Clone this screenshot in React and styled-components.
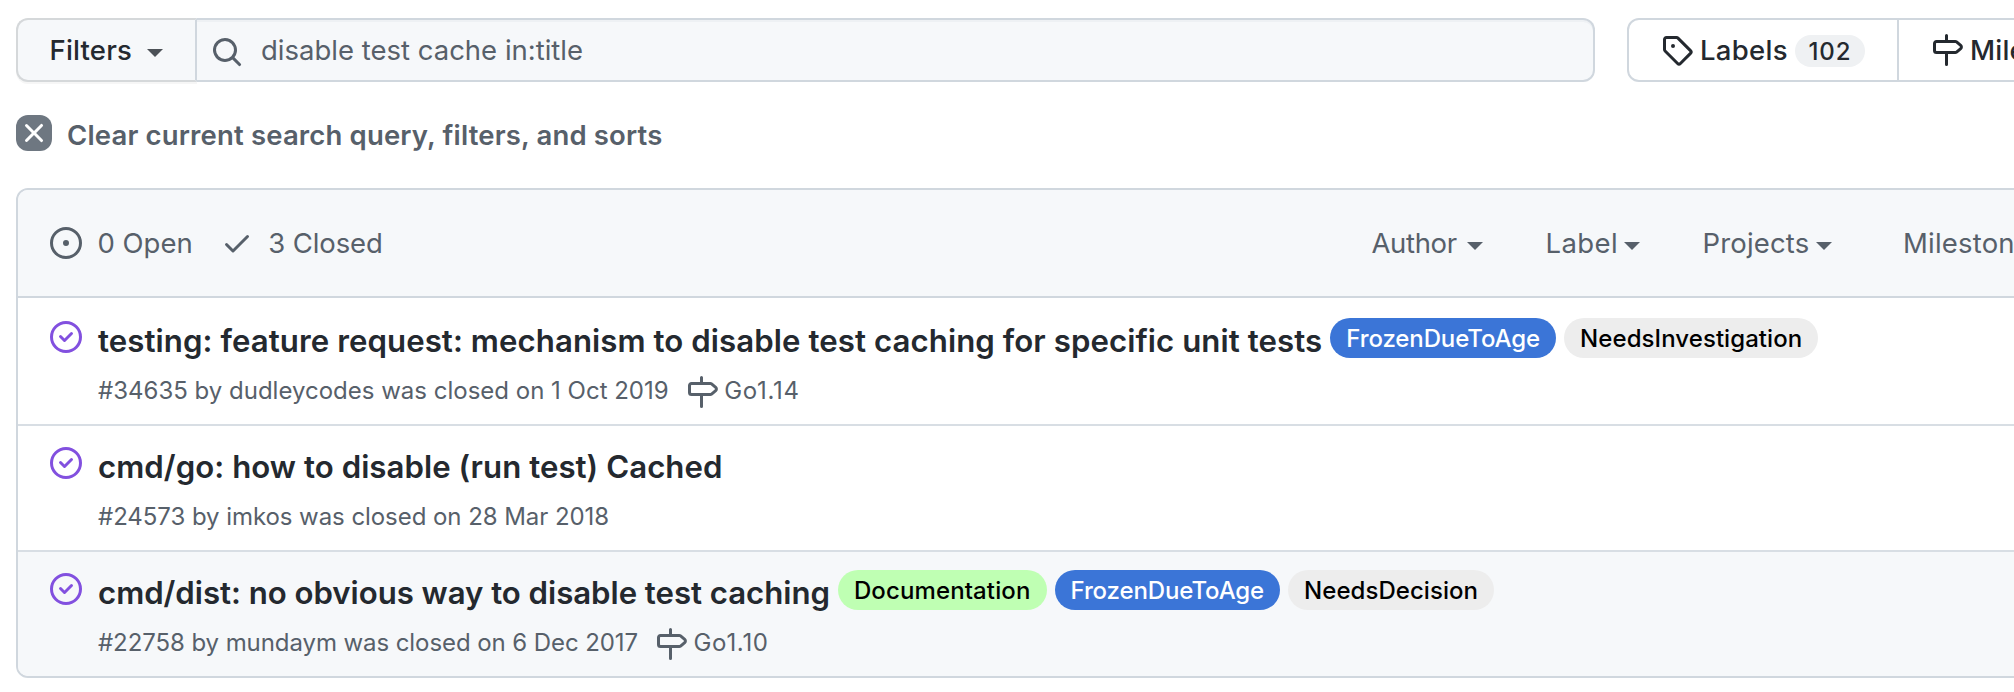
import React from "react";
import styled, { createGlobalStyle } from "styled-components";

const color = {
  text: "#24292f",
  muted: "#57606a",
  border: "#d0d7de",
  rowBorder: "#d8dee4",
  subtle: "#f6f8fa",
  done: "#8250df",
};

const GlobalStyle = createGlobalStyle`
  * { box-sizing: border-box; }
  body {
    margin: 0;
    overflow: hidden;
    background: #fff;
    color: ${color.text};
    font-family: Inter, "Liberation Sans", sans-serif;
    font-size: 27.5px;
  }
`;

const Page = styled.main`
  width: 2080px;
  height: 692px;
  padding: 18px 0 0 16px;
  overflow: hidden;
`;

const Text = styled.span`
  letter-spacing: ${(p) => p.$tracking || 0}px;
  white-space: nowrap;
`;

const Svg = styled.svg`
  display: block;
  flex: none;
  width: 32px;
  height: 32px;
  fill: currentColor;
`;

const Caret = styled.span`
  flex: none;
  border: 8px solid transparent;
  border-top-color: currentColor;
  border-bottom: 0;
`;

const Toolbar = styled.div`
  display: flex;
  height: 64px;
`;

const FilterButton = styled.button`
  display: flex;
  flex: none;
  align-items: center;
  justify-content: space-between;
  width: 181px;
  padding: 0 32px 0 31.5px;
  border: 2px solid #d5d8da;
  border-right-color: ${color.border};
  border-radius: 12px 0 0 12px;
  background: ${color.subtle};
  box-shadow: 0 2px 0 rgba(27, 31, 36, 0.04);
  color: ${color.text};
  font: inherit;
  font-weight: 500;

  ${Caret} {
    margin-top: 5px;
    color: #4c5157;
  }
`;

const SearchField = styled.div`
  display: flex;
  flex: none;
  align-items: center;
  gap: 18.5px;
  width: 1398px;
  padding-left: 13.5px;
  border: 2px solid ${color.border};
  border-left: 0;
  border-radius: 0 12px 12px 0;
  background: ${color.subtle};
  box-shadow: inset 0 2px 0 rgba(208, 215, 222, 0.2);
  color: ${color.muted};

  ${Svg} {
    margin-top: 4px;
  }
`;

const Subnav = styled.nav`
  display: flex;
  flex: none;
  margin-left: 32px;
  border: 2px solid ${color.border};
  border-radius: 12px;
  font-weight: 500;
`;

const SubnavItem = styled.a`
  display: flex;
  flex: none;
  align-items: center;
  gap: 7px;
  width: ${(p) => p.$width}px;
  padding-left: 32px;

  & + & {
    border-left: 2px solid ${color.border};
  }
`;

const Counter = styled.span`
  display: flex;
  align-items: center;
  justify-content: center;
  width: 70px;
  height: 32px;
  margin-top: 2px;
  border-radius: 16px;
  background: #eff1f3;
  font-size: 24px;
`;

const ClearLink = styled.a`
  display: flex;
  align-items: center;
  gap: 15px;
  height: 36px;
  margin: 33px 0 37px;
  color: ${color.muted};
  font-weight: 600;

  ${Text} {
    margin-top: 3px;
  }
`;

const ClearIcon = styled.span`
  display: grid;
  place-items: center;
  width: 36px;
  height: 36px;
  border-radius: 12px;
  background: #6e7781;
  color: #fff;
`;

const IssueBox = styled.section`
  height: 490px;
  border: 2px solid ${color.border};
  border-radius: 12px;
  overflow: hidden;
`;

const BoxHeader = styled.header`
  display: flex;
  align-items: center;
  height: 108px;
  padding-left: 32px;
  border-bottom: 2px solid ${color.border};
  background: ${color.subtle};
  color: ${color.muted};
`;

const Counts = styled.div`
  display: flex;
  flex: 0 0 1321.5px;
  gap: 28px;
`;

const Count = styled.a`
  display: flex;
  align-items: center;
  gap: 15.5px;
`;

const Menus = styled.div`
  display: flex;
  gap: 63px;
`;

const MenuButton = styled.div`
  display: flex;
  flex: none;
  align-items: center;
  justify-content: space-between;
  width: ${(p) => p.$width}px;

  &:last-child {
    margin-left: 8px;
  }

  ${Caret} {
    margin-top: 6px;
  }
`;

const Row = styled.article`
  display: flex;
  gap: 16px;
  height: 126px;
  padding: 18px 0 0 32px;
  border-top: 2px solid ${color.rowBorder};
  background: ${(p) => (p.$hovered ? color.subtle : "#fff")};

  header + & {
    border-top-color: transparent;
  }

  > ${Svg} {
    margin-top: 3px;
    color: ${color.done};
  }
`;

const TitleLine = styled.div`
  display: flex;
  align-items: flex-start;
  gap: 8px;
  height: 46px;
`;

const Title = styled.h3`
  margin: 0;
  font-size: 31.2px;
  font-weight: 600;
  line-height: 46px;
  letter-spacing: ${(p) => p.$tracking}px;
  white-space: nowrap;
`;

const tones = {
  blue: ["#3b75d7", "#fff"],
  green: ["#bfffb3", "#000"],
  gray: ["#ededed", "#000"],
};

const Label = styled.span`
  height: 40px;
  padding: 0 16px;
  border-radius: 20px;
  background: ${(p) => tones[p.$tone][0]};
  color: ${(p) => tones[p.$tone][1]};
  font-size: 24px;
  font-weight: 500;
  line-height: 42px;
  letter-spacing: ${(p) => p.$tracking}px;
`;

const Meta = styled.div`
  display: flex;
  gap: 17px;
  margin-top: 11px;
  color: ${color.muted};
  font-size: 24px;
  line-height: 32px;
`;

const MilestoneLink = styled.a`
  display: flex;
  gap: 6.5px;

  ${Svg} {
    margin-top: 1px;
  }
`;

const paths = {
  search:
    "M11.5 7a4.499 4.499 0 11-8.998 0A4.499 4.499 0 0111.5 7zm-.82 4.74a6 6 0 111.06-1.06l3.04 3.04a.75.75 0 11-1.06 1.06l-3.04-3.04z",
  tag: "M2.5 7.775V2.75a.25.25 0 01.25-.25h5.025a.25.25 0 01.177.073l6.25 6.25a.25.25 0 010 .354l-5.025 5.025a.25.25 0 01-.354 0l-6.25-6.25a.25.25 0 01-.073-.177zm-1.5 0V2.75C1 1.784 1.784 1 2.75 1h5.025c.464 0 .91.184 1.238.513l6.25 6.25a1.75 1.75 0 010 2.474l-5.026 5.026a1.75 1.75 0 01-2.474 0l-6.25-6.25A1.75 1.75 0 011 7.775zM6 5a1 1 0 100 2 1 1 0 000-2z",
  milestone:
    "M7.75 0a.75.75 0 01.75.75V3h3.634c.414 0 .814.147 1.13.414l2.07 1.75a1.75 1.75 0 010 2.672l-2.07 1.75a1.75 1.75 0 01-1.13.414H8.5v5.25a.75.75 0 11-1.5 0V10H2.75A1.75 1.75 0 011 8.25v-3.5C1 3.784 1.784 3 2.75 3H7V.75A.75.75 0 017.75 0zm0 8.5h4.384a.25.25 0 00.161-.06l2.07-1.75a.25.25 0 000-.38l-2.07-1.75a.25.25 0 00-.161-.06H2.75a.25.25 0 00-.25.25v3.5c0 .138.112.25.25.25h5z",
  x: "M3.72 3.72a.75.75 0 011.06 0L8 6.94l3.22-3.22a.75.75 0 111.06 1.06L9.06 8l3.22 3.22a.75.75 0 11-1.06 1.06L8 9.06l-3.22 3.22a.75.75 0 01-1.06-1.06L6.94 8 3.72 4.78a.75.75 0 010-1.06z",
  open: "M8 9.5a1.5 1.5 0 100-3 1.5 1.5 0 000 3zM8 0a8 8 0 100 16A8 8 0 008 0zM1.5 8a6.5 6.5 0 1113 0 6.5 6.5 0 01-13 0z",
  check:
    "M13.78 4.22a.75.75 0 010 1.06l-7.25 7.25a.75.75 0 01-1.06 0L2.22 9.28a.75.75 0 011.06-1.06L6 10.94l6.72-6.72a.75.75 0 011.06 0z",
  closed:
    "M11.28 6.78a.75.75 0 00-1.06-1.06L7.25 8.69 5.78 7.22a.75.75 0 00-1.06 1.06l2 2a.75.75 0 001.06 0l3.5-3.5zM16 8A8 8 0 110 8a8 8 0 0116 0zm-1.5 0a6.5 6.5 0 11-13 0 6.5 6.5 0 0113 0z",
};

const Icon = ({ name }) => (
  <Svg viewBox="0 0 16 16" aria-hidden="true">
    <path fillRule="evenodd" d={paths[name]} />
  </Svg>
);

const menus = [
  { name: "Author", width: 111, tracking: -0.36 },
  { name: "Label", width: 94, tracking: 0.4 },
  { name: "Projects", width: 129.5, tracking: 0.15 },
  { name: "Milestones", width: 166, tracking: 0.2 },
];

const issues = [
  {
    title: "testing: feature request: mechanism to disable test caching for specific unit tests",
    tracking: 0.07,
    labels: [
      { name: "FrozenDueToAge", tone: "blue", tracking: -0.1 },
      { name: "NeedsInvestigation", tone: "gray", tracking: 0.07 },
    ],
    meta: "#34635 by dudleycodes was closed on 1 Oct 2019",
    metaTracking: 0,
    milestone: "Go1.14",
  },
  {
    title: "cmd/go: how to disable (run test) Cached",
    tracking: 0.04,
    labels: [],
    meta: "#24573 by imkos was closed on 28 Mar 2018",
    metaTracking: -0.06,
  },
  {
    title: "cmd/dist: no obvious way to disable test caching",
    tracking: -0.04,
    labels: [
      { name: "Documentation", tone: "green", tracking: 0.12 },
      { name: "FrozenDueToAge", tone: "blue", tracking: -0.12 },
      { name: "NeedsDecision", tone: "gray", tracking: 0.05 },
    ],
    meta: "#22758 by mundaym was closed on 6 Dec 2017",
    metaTracking: -0.08,
    milestone: "Go1.10",
    hovered: true,
  },
];

export default function App() {
  return (
    <Page>
      <GlobalStyle />
      <Toolbar>
        <FilterButton>
          <Text $tracking={0.2}>Filters</Text>
          <Caret />
        </FilterButton>
        <SearchField>
          <Icon name="search" />
          <Text>disable test cache in:title</Text>
        </SearchField>
        <Subnav>
          <SubnavItem $width={268}>
            <Icon name="tag" />
            <Text $tracking={0.3}>Labels</Text>
            <Counter>
              <Text $tracking={0.9}>102</Text>
            </Counter>
          </SubnavItem>
          <SubnavItem $width={300}>
            <Icon name="milestone" />
            <Text $tracking={0.2}>Milestones</Text>
          </SubnavItem>
        </Subnav>
      </Toolbar>
      <ClearLink>
        <ClearIcon>
          <Icon name="x" />
        </ClearIcon>
        <Text $tracking={0.16}>Clear current search query, filters, and sorts</Text>
      </ClearLink>
      <IssueBox>
        <BoxHeader>
          <Counts>
            <Count>
              <Icon name="open" />
              <Text>0 Open</Text>
            </Count>
            <Count>
              <Icon name="check" />
              <Text $tracking={-0.1}>3 Closed</Text>
            </Count>
          </Counts>
          <Menus>
            {menus.map((m) => (
              <MenuButton key={m.name} $width={m.width}>
                <Text $tracking={m.tracking}>{m.name}</Text>
                <Caret />
              </MenuButton>
            ))}
          </Menus>
        </BoxHeader>
        {issues.map((issue) => (
          <Row key={issue.title} $hovered={issue.hovered}>
            <Icon name="closed" />
            <div>
              <TitleLine>
                <Title $tracking={issue.tracking}>{issue.title}</Title>
                {issue.labels.map((l) => (
                  <Label key={l.name} $tone={l.tone} $tracking={l.tracking}>
                    {l.name}
                  </Label>
                ))}
              </TitleLine>
              <Meta>
                <Text $tracking={issue.metaTracking}>{issue.meta}</Text>
                {issue.milestone && (
                  <MilestoneLink>
                    <Icon name="milestone" />
                    <Text $tracking={0.7}>{issue.milestone}</Text>
                  </MilestoneLink>
                )}
              </Meta>
            </div>
          </Row>
        ))}
      </IssueBox>
    </Page>
  );
}
